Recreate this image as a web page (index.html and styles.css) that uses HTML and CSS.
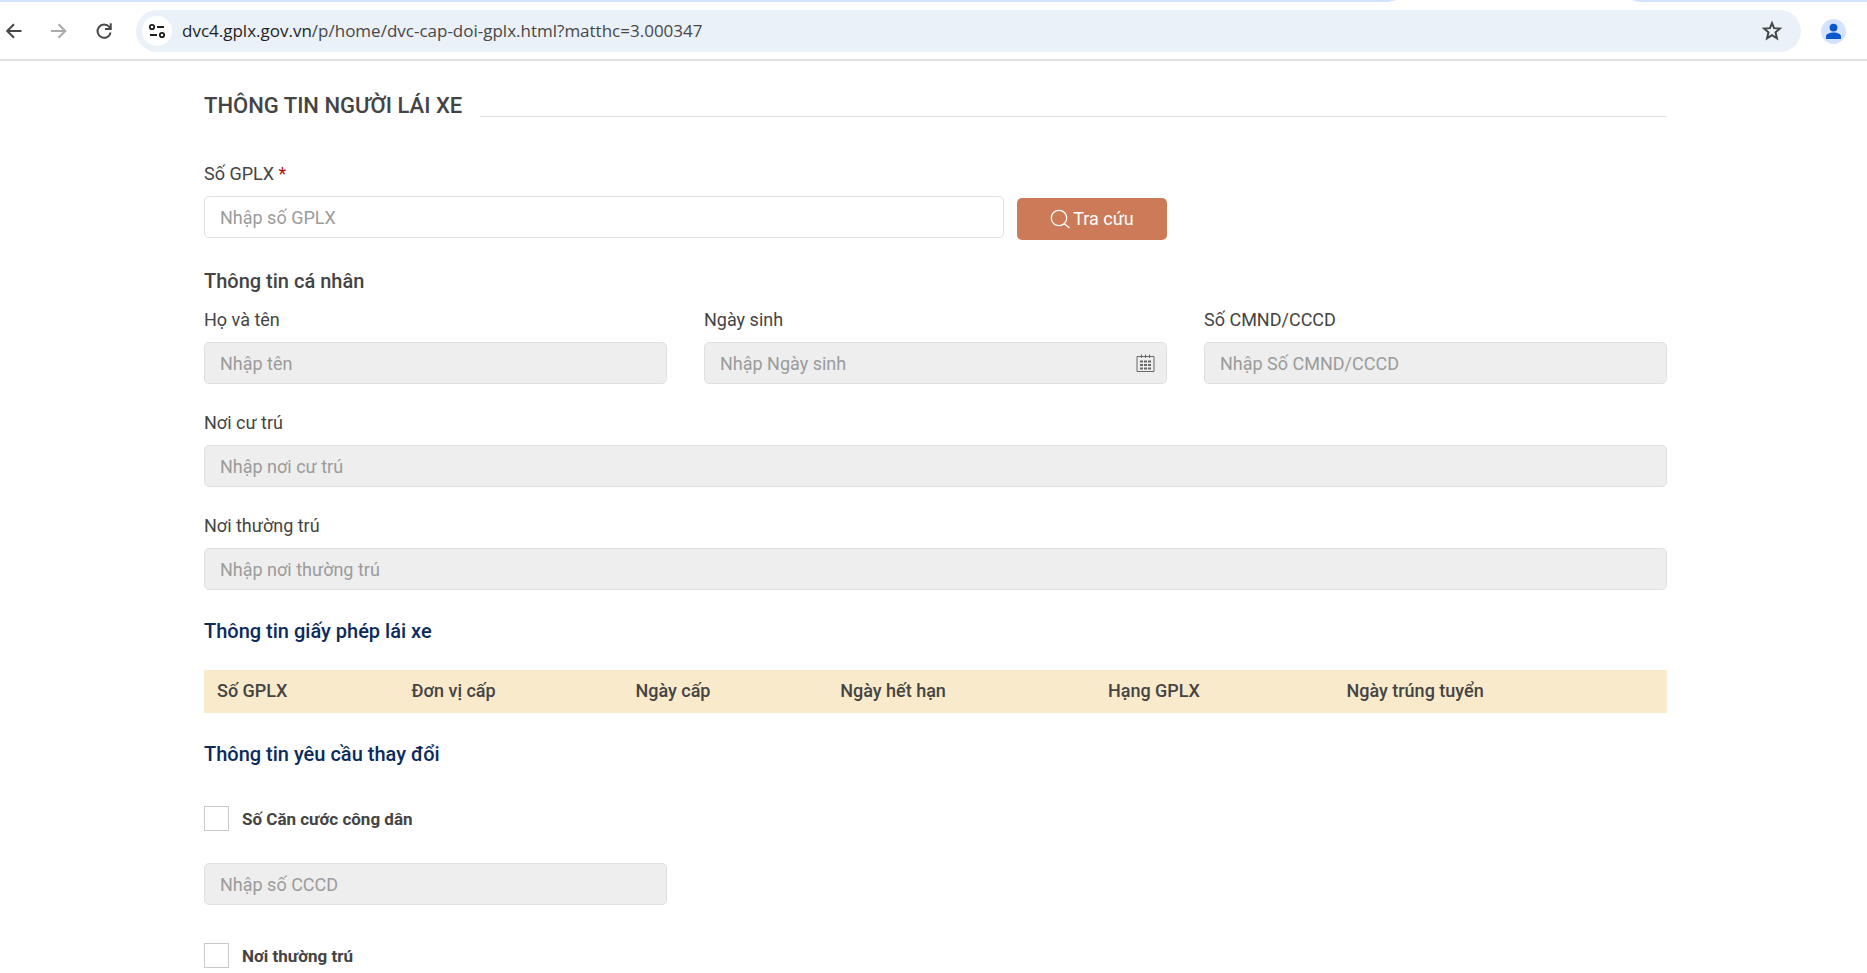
FILE: index.html
```html
<!DOCTYPE html>
<html lang="vi">
<head>
<meta charset="utf-8">
<title>Thông tin người lái xe</title>
<link rel="stylesheet" href="styles.css">
</head>
<body>
<header class="browser">
  <div class="tab-strip">
    <svg class="tab-foot" viewBox="0 0 252 2" aria-hidden="true"><path d="M0 2Q6 1 8 0H244Q246 1 252 2Z" fill="#fff"/></svg>
  </div>
  <div class="toolbar">
    <button class="nav-button" type="button" aria-label="Back">
      <svg viewBox="0 0 20 20"><path d="M17.500 10H4M10 3.200L3.200 10L10 16.800" fill="none" stroke="#444746" stroke-width="2"/></svg>
    </button>
    <button class="nav-button" type="button" aria-label="Forward">
      <svg viewBox="0 0 20 20"><path d="M2 10H15.500M9.500 3.200L16.300 10L9.500 16.800" fill="none" stroke="#a9abaa" stroke-width="2"/></svg>
    </button>
    <button class="nav-button" type="button" aria-label="Reload">
      <svg viewBox="0 0 20 20"><path d="M16.600 11.500A6.600 6.600 0 1 1 15.300 6L16.800 7.800" fill="none" stroke="#444746" stroke-width="2"/><path d="M17.700 2.300V9H11V7H15.700V2.300Z" fill="#444746"/></svg>
    </button>
    <div class="address">
      <button class="site-info" type="button" aria-label="Site information">
        <svg viewBox="0 0 18 16"><g fill="none" stroke="#1f1f1f" stroke-width="1.800"><circle cx="4" cy="4" r="2.200"/><path d="M9 4H16M2 12H9"/><circle cx="14" cy="12" r="2.200"/></g></svg>
      </button>
      <span class="url"><span class="host">dvc4.gplx.gov.vn</span>/p/home/dvc-cap-doi-gplx.html?matthc=3.000347</span>
      <button class="star" type="button" aria-label="Bookmark">
        <svg viewBox="0 0 20 20"><path d="M10 2.800L11.900 7.400L17.200 7.800L13.200 11.200L14.500 16.700L10 13.800L5.500 16.700L6.800 11.200L2.800 7.800L8.100 7.400Z" fill="none" stroke="#444746" stroke-width="1.800"/></svg>
      </button>
    </div>
    <button class="profile" type="button" aria-label="Profile">
      <svg viewBox="0 0 25 25"><circle cx="12.500" cy="12.500" r="12.500" fill="#d3e3fd"/><circle cx="12.500" cy="8.600" r="3.900" fill="#0b57d0"/><path d="M5 20V17.500C5 14.500 9.500 13.500 12.500 13.500S20 14.500 20 17.500V20Z" fill="#0b57d0"/></svg>
    </button>
  </div>
</header>

<main class="page">
  <form class="form">
    <div class="title-row">
      <h1 class="title">THÔNG TIN NGƯỜI LÁI XE</h1>
      <div class="rule"></div>
    </div>

    <div class="columns search-block">
      <div class="field search-field">
        <label for="gplx">Số GPLX <span class="required">*</span></label>
        <div class="search-row">
          <input class="input" id="gplx" type="text" placeholder="Nhập số GPLX">
          <button class="search-button" type="button">
            <svg viewBox="0 0 20 20" aria-hidden="true"><circle cx="9" cy="9" r="7.700"/><path d="M14 14.500L19.500 19"/></svg>
            Tra cứu
          </button>
        </div>
      </div>
    </div>

    <h2 class="heading">Thông tin cá nhân</h2>
    <div class="fields">
      <div class="columns">
        <div class="field">
          <label for="name">Họ và tên</label>
          <input class="input" id="name" type="text" placeholder="Nhập tên" disabled>
        </div>
        <div class="field">
          <label for="birth">Ngày sinh</label>
          <div class="date-box">
            <input class="input" id="birth" type="text" placeholder="Nhập Ngày sinh" disabled>
            <svg class="calendar" viewBox="0 0 19 19" aria-hidden="true"><path d="M5.500 0.500V4M9.500 0.500V4M13.500 0.500V4M1 2.500H18V17.500H1Z" fill="none" stroke="#686868"/><path d="M4 7.500H15M4 11H15M4 14.500H15" fill="none" stroke="#686868" stroke-width="2" stroke-dasharray="3 1"/></svg>
          </div>
        </div>
        <div class="field">
          <label for="cmnd">Số CMND/CCCD</label>
          <input class="input" id="cmnd" type="text" placeholder="Nhập Số CMND/CCCD" disabled>
        </div>
      </div>
      <div class="field">
        <label for="residence">Nơi cư trú</label>
        <input class="input" id="residence" type="text" placeholder="Nhập nơi cư trú" disabled>
      </div>
      <div class="field">
        <label for="permanent">Nơi thường trú</label>
        <input class="input" id="permanent" type="text" placeholder="Nhập nơi thường trú" disabled>
      </div>
    </div>

    <h2 class="heading heading-blue">Thông tin giấy phép lái xe</h2>
    <table class="licences">
      <colgroup><col class="col-number"><col class="col-unit"><col class="col-issued"><col class="col-expiry"><col class="col-class"><col></colgroup>
      <thead>
        <tr><th>Số GPLX</th><th>Đơn vị cấp</th><th>Ngày cấp</th><th>Ngày hết hạn</th><th>Hạng GPLX</th><th>Ngày trúng tuyển</th></tr>
      </thead>
    </table>

    <h2 class="heading heading-blue">Thông tin yêu cầu thay đổi</h2>
    <div class="changes">
      <label class="check"><input type="checkbox"><span>Số Căn cước công dân</span></label>
      <div class="columns">
        <input class="input" type="text" placeholder="Nhập số CCCD" aria-label="Số CCCD" disabled>
      </div>
      <label class="check check-next"><input type="checkbox"><span>Nơi thường trú</span></label>
    </div>
  </form>
</main>
</body>
</html>
```
FILE: styles.css
```css
* {
  box-sizing: border-box;
}

body {
  margin: 0;
  background: #fff;
  color: #444;
  font: 18px/24px Roboto, sans-serif;
}

button {
  border: 0;
  padding: 0;
  background: none;
  font: inherit;
}

svg {
  display: block;
}

/* Browser bar */
.browser {
  border-bottom: 2px solid #dedede;
}

.tab-strip {
  display: flex;
  justify-content: flex-end;
  height: 2px;
  padding-right: 227px;
  background: #d3e3fd;
}

.tab-foot {
  width: 252px;
  height: 2px;
}

.toolbar {
  display: flex;
  align-items: center;
  padding: 8px 21px 7px 4px;
}

.nav-button {
  width: 20px;
  margin-right: 25px;
}

.address {
  display: flex;
  flex: 1;
  align-items: center;
  height: 42px;
  margin: 0 20px 0 -3px;
  padding: 0 18px 0 6px;
  border-radius: 21px;
  background: #ebf1f9;
}

.site-info {
  display: grid;
  place-items: center;
  width: 30px;
  height: 30px;
  border-radius: 50%;
  background: #fff;
}

.site-info svg {
  width: 18px;
}

.url {
  flex: 1;
  margin-left: 10px;
  color: #474747;
  font: 17px/24px "Open Sans", "Noto Sans", sans-serif;
}

.host {
  color: #1f1f1f;
}

.star {
  width: 22px;
}

.profile {
  width: 25px;
}

/* Form */
.page {
  padding: 30px 200px 0 204px;
}

.title-row {
  display: flex;
  gap: 18px;
  margin-bottom: 41px;
}

.title {
  margin: 0;
  font-size: 22px;
  font-weight: 500;
  line-height: 30px;
}

.rule {
  flex: 1;
  height: 26px;
  border-bottom: 1px solid #e0e0e0;
}

.columns {
  display: grid;
  grid-template-columns: repeat(3, 1fr);
  column-gap: 37px;
}

.field {
  display: flex;
  flex-direction: column;
  gap: 10px;
}

.fields {
  display: flex;
  flex-direction: column;
  gap: 27px;
  margin: 13px 0 27px;
}

.search-block {
  margin-bottom: 27px;
}

.search-field {
  grid-column: span 2;
}

.search-row {
  display: flex;
  gap: 13px;
}

.required {
  color: #b01010;
}

.input {
  width: 100%;
  height: 42px;
  padding: 0 15px;
  border: 1px solid #e0e0e0;
  border-radius: 5px;
  background: #fff;
  color: #444;
  font: inherit;
}

.input:disabled {
  background: #eee;
}

.input::placeholder {
  color: #9b9b9b;
  opacity: 1;
}

.search-button {
  display: flex;
  flex: none;
  align-items: center;
  justify-content: center;
  gap: 3px;
  width: 150px;
  height: 42px;
  margin-top: 2px;
  border-radius: 5px;
  background: #cc7a58;
  color: #fff;
}

.search-button svg {
  width: 20px;
  fill: none;
  stroke: #fff;
  stroke-width: 1.3;
}

.heading {
  margin: 0;
  font-size: 20px;
  font-weight: 500;
  line-height: 28px;
}

.heading-blue {
  color: #0b2b5c;
}

.date-box {
  position: relative;
}

.calendar {
  position: absolute;
  top: 12px;
  right: 12px;
  width: 19px;
}

.licences {
  width: 100%;
  margin: 25px 0 27px;
  border-collapse: collapse;
  table-layout: fixed;
  background: #faeacc;
}

.licences th {
  height: 43px;
  padding: 0 13px 1px;
  font-weight: 500;
  text-align: left;
}

.col-number {
  width: 13.3%;
}

.col-unit {
  width: 15.3%;
}

.col-issued {
  width: 14%;
}

.col-expiry {
  width: 18.3%;
}

.col-class {
  width: 16.3%;
}

.changes {
  padding: 38px 0 5px;
}

.check {
  display: flex;
  align-items: center;
  gap: 13px;
  width: max-content;
  margin-bottom: 32px;
  font-size: 17px;
  font-weight: 700;
}

.check input {
  width: 25px;
  height: 25px;
  margin: 0;
  border: 1px solid #c8c8c8;
  background: #fff;
  appearance: none;
}

.check input:checked {
  background: #cc7a58;
}

.check-next {
  margin: 38px 0 0;
}
```
